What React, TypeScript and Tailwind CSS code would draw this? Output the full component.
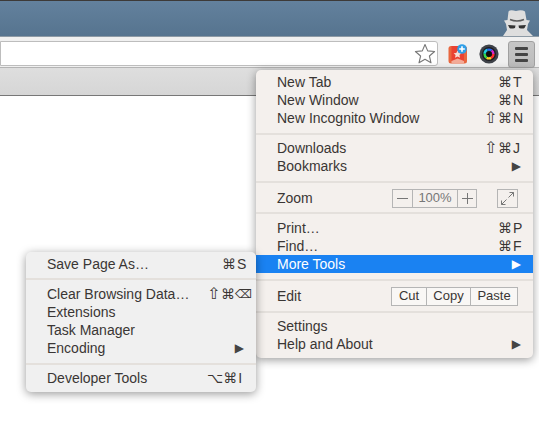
import React from "react";

const font = "[font-family:'Liberation_Sans',Arial,sans-serif]";
const sym = "[font-family:'DejaVu_Sans',sans-serif]";

type Gap = "default" | "even" | "wide";
function Sep({ gap = "default" }: { gap?: Gap }) {
  const m = gap === "even" ? "my-[5px]" : gap === "wide" ? "my-[6px]" : "mt-[6px] mb-[4px]";
  return <div className={`h-[2px] bg-[#e4e0dc] ${m}`} />;
}
function Row({ label, sc, w, arrow, active }: { label: string; sc?: string; w?: string; arrow?: boolean; active?: boolean }) {
  return (
    <div className={`h-[18px] flex items-center justify-between pl-[21px] pr-[12px] ${active ? "bg-[#1a82f2] text-white" : ""}`}>
      <span>{label}</span>
      {sc && <Shortcut text={sc} w={w} />}
      {arrow && <span className={`${sym} text-[12px] leading-none ${active ? "text-white" : "text-[#444]"}`}>▶</span>}
    </div>
  );
}
function Shortcut({ text, w = "w-[23px]" }: { text: string; w?: string }) {
  return (
    <span className={`flex items-center justify-start shrink-0 text-[14px] ${w}`}>
      {text.split("").map((k, i) =>
        /[A-Z]/.test(k) ? (
          <span key={i} className="ml-[1px]">{k}</span>
        ) : (
          <span
            key={i}
            className={`${sym} leading-none ${k === "⇧" ? "text-[16px] w-[14px] shrink-0" : k === "⌫" ? "text-[12px]" : "text-[14px]"}`}
          >
            {k}
          </span>
        )
      )}
    </span>
  );
}
function Btn({ w, children, cls = "" }: { w: string; children?: React.ReactNode; cls?: string }) {
  return <div className={`${w} h-full flex items-center justify-center ${cls}`}>{children}</div>;
}

const lens = ["#ff2d2d", "#ffd21e", "#35d94a", "#1fd0e0", "#2a6cf0", "#d626c8"];

export default function App() {
  return (
    <div className={`relative w-[539px] h-[424px] overflow-hidden bg-white ${font} text-[14px] text-[#3a3634]`}>
      <div className="h-[1px] bg-[#3d3a38]" />
      <div className="h-[35px] bg-gradient-to-b from-[#63819d] to-[#56748f] flex justify-end">
        <svg width="38" height="35" viewBox="500 1 38 35" className="mr-[1px]">
          <path d="M507.5 20 L508.5 11.5 Q510 9.5 516 11 Q522 9.5 525 11.5 L526.5 20 L530 20.5 L528 24 L527 30 L533 36 H503 L507 30 L506 24 L504 20.5 Z" fill="#dedede" />
          <path d="M510 19.5 Q517 22.5 524 19.5" fill="none" stroke="#5c5c5c" strokeWidth="1.4" />
          <path d="M508 25 L515.5 25.5 L515 28 Q511 29 509.5 28 Z M526 25 L518.5 25.5 L519 28 Q523 29 524.5 28 Z" fill="#333" />
        </svg>
      </div>
      <div className="h-[31px] bg-[#f0f0f0] border-t border-[#8d9aa5] flex items-start">
        <div className="flex-1 h-[25px] mt-[4px] bg-white border border-[#bdbdbd] rounded-r-[3px] flex items-center justify-end pr-[1px]">
          <svg width="22" height="22" viewBox="0 0 22 22">
            <path d="M11 1.5 L13.7 7.9 L20.6 8.5 L15.4 13 L17 19.8 L11 16.2 L5 19.8 L6.6 13 L1.4 8.5 L8.3 7.9 Z" fill="#fff" stroke="#777" strokeWidth="1.1" strokeLinejoin="round" />
          </svg>
        </div>
        <div className="w-[10px]" />
        <svg width="20" height="20" viewBox="448 45 20 20" className="mt-[8px] overflow-visible">
          <rect x="448.5" y="46" width="18.5" height="17.5" rx="2.5" fill="#e8673f" />
          <rect x="451.5" y="46" width="12.5" height="15" fill="#ea4232" />
          <path d="M451.5 61 L457.7 58.5 L464 61 V63.5 H451.5 Z" fill="#f3ab98" />
          <path d="M457.5 50.5 L458.7 53 L461.4 53.3 L459.4 55.1 L460 57.8 L457.5 56.4 L455 57.8 L455.6 55.1 L453.6 53.3 L456.3 53 Z" fill="#f8dfd8" />
          <circle cx="462" cy="49" r="4.8" fill="#2e9fe8" />
          <path d="M462 46.2 V51.8 M459.2 49 H464.8" stroke="#fff" strokeWidth="1.6" />
        </svg>
        <div className="w-[11px]" />
        <svg width="20" height="20" viewBox="0 0 20 20" className="mt-[7px]">
          <circle cx="10" cy="10" r="9.6" fill="#3e4249" />
          <circle cx="10" cy="10" r="7" fill="#1c1d20" />
          {lens.map((c, i) => (
            <circle key={c} cx="10" cy="10" r="4.4" fill="none" stroke={c} strokeWidth="2.4" strokeDasharray="4.61 23.04" strokeDashoffset={-4.61 * i} />
          ))}
          <circle cx="10" cy="10" r="2.6" fill="#0c0c0e" />
        </svg>
        <div className="w-[9px]" />
        <div className="relative w-[27px] h-[27px] mt-[4px] rounded-[3px] border border-[#a0a0a0] bg-gradient-to-b from-[#c6c6c6] to-[#bcbcbc] flex flex-col items-center justify-center gap-[3px]">
          <div className="w-[13px] h-[3px] rounded-[1px] bg-[#444]" />
          <div className="w-[13px] h-[3px] rounded-[1px] bg-[#444]" />
          <div className="w-[13px] h-[3px] rounded-[1px] bg-[#444]" />
        </div>
        <div className="w-[4px]" />
      </div>
      <div className="h-[29px] bg-gradient-to-b from-[#dedede] to-[#d6d6d6] border-t border-[#b4b4b4] border-b border-b-[#777]" />

      {/* Main menu */}
      <div className="absolute left-[256px] top-[70px] w-[277px] h-[288px] py-[3px] rounded-[5px] bg-[#f4f0ed] shadow-[0_2px_10px_rgba(0,0,0,0.4)]">
        <Row label="New Tab" sc="⌘T" />
        <Row label="New Window" sc="⌘N" />
        <Row label="New Incognito Window" sc="⇧⌘N" w="w-[37px]" />
        <Sep />
        <Row label="Downloads" sc="⇧⌘J" w="w-[37px]" />
        <Row label="Bookmarks" arrow />
        <Sep gap="wide" />
        <div className="h-[18px] flex items-center justify-between pl-[21px] pr-[15px]">
          <span>Zoom</span>
          <div className="flex items-center">
            <div className="h-[19px] w-[85px] flex border border-[#b5b5b5] text-[13px] text-[#777] mr-[20px]">
              <Btn w="w-[20px]" cls="border-r border-[#b5b5b5]">
                <div className="w-[11px] h-[1px] bg-[#777]" />
              </Btn>
              <Btn w="w-[45px]" cls="border-r border-[#b5b5b5]">100%</Btn>
              <Btn w="w-[18px]">
                <svg width="11" height="11" viewBox="0 0 11 11"><path d="M5.5 0 V11 M0 5.5 H11" stroke="#777" /></svg>
              </Btn>
            </div>
            <div className="h-[19px] w-[21px] border border-[#b5b5b5] flex items-center justify-center">
              <svg width="15" height="15" viewBox="0 0 15 15" fill="none" stroke="#777">
                <path d="M8.5 6.5 L13.5 1.5 M9.5 1.5 H13.5 V5.5 M6.5 8.5 L1.5 13.5 M1.5 9.5 V13.5 H5.5" />
              </svg>
            </div>
          </div>
        </div>
        <Sep gap="even" />
        <Row label="Print…" sc="⌘P" />
        <Row label="Find…" sc="⌘F" />
        <Row label="More Tools" arrow active />
        <Sep gap="wide" />
        <div className="h-[18px] flex items-center justify-between pl-[21px] pr-[15px]">
          <span>Edit</span>
          <div className="h-[19px] w-[127px] flex border border-[#b5b5b5] bg-[#f9f7f5] text-[13px]">
            <Btn w="w-[35px]" cls="border-r border-[#b5b5b5]">Cut</Btn>
            <Btn w="w-[44px]" cls="border-r border-[#b5b5b5]">Copy</Btn>
            <Btn w="w-[46px]">Paste</Btn>
          </div>
        </div>
        <Sep />
        <Row label="Settings" />
        <Row label="Help and About" arrow />
      </div>

      {/* Submenu */}
      <div className="absolute left-[26px] top-[252px] w-[230px] h-[140px] py-[3px] rounded-[5px] bg-[#f0f0f0] shadow-[0_2px_10px_rgba(0,0,0,0.4)]">
        <Row label="Save Page As…" sc="⌘S" w="w-[22px]" />
        <Sep gap="even" />
        <Row label="Clear Browsing Data…" sc="⇧⌘⌫" w="w-[37px]" />
        <Row label="Extensions" />
        <Row label="Task Manager" />
        <Row label="Encoding" arrow />
        <Sep />
        <Row label="Developer Tools" sc="⌥⌘I" w="w-[37px]" />
      </div>
    </div>
  );
}
